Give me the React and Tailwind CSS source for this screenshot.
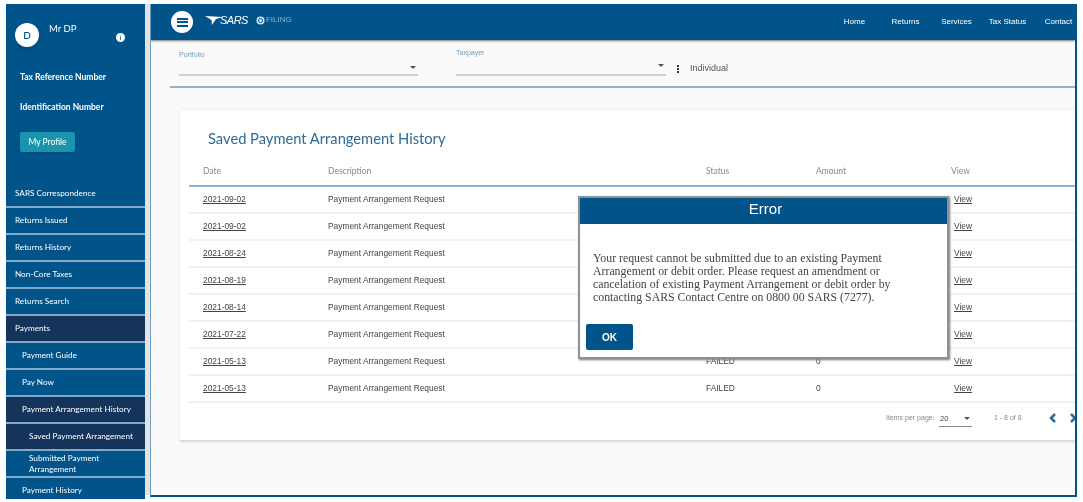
const menu = [
  { label: "SARS Correspondence", pad: "pl-[9px]" },
  { label: "Returns Issued", pad: "pl-[9px]" },
  { label: "Returns History", pad: "pl-[9px]" },
  { label: "Non-Core Taxes", pad: "pl-[9px]" },
  { label: "Returns Search", pad: "pl-[9px]" },
  { label: "Payments", pad: "pl-[9px]", active: true },
  { label: "Payment Guide", pad: "pl-[16px]" },
  { label: "Pay Now", pad: "pl-[16px]" },
  { label: "Payment Arrangement History", pad: "pl-[16px]", active: true },
  { label: "Saved Payment Arrangement", pad: "pl-[23px]", active: true },
  { label: "Submitted Payment Arrangement", pad: "pl-[23px] pr-[30px]" },
  { label: "Payment History", pad: "pl-[16px]" },
];

const rows = [
  { date: "2021-09-02" },
  { date: "2021-09-02" },
  { date: "2021-08-24" },
  { date: "2021-08-19" },
  { date: "2021-08-14" },
  { date: "2021-07-22" },
  { date: "2021-05-13", status: "FAILED", amount: "0" },
  { date: "2021-05-13", status: "FAILED", amount: "0" },
];

const nav = ["Home", "Returns", "Services", "Tax Status", "Contact"];

function Caret({ className }) {
  return <span className={`block w-0 h-0 border-x-[3px] border-x-transparent border-t-[3px] border-t-[#555] ${className || ""}`} />;
}

function Sidebar() {
  return (
    <aside className="w-[139px] h-[495px] shrink-0 bg-[#01548a] overflow-hidden font-['Lato',sans-serif] text-white">
      <div className="h-[175px] relative pl-[14px]">
        <div className="flex items-start gap-[10px] pt-[19px] -ml-[5px]">
          <div className="w-[24px] h-[24px] rounded-full bg-white text-[#01548a] text-[10px] font-semibold flex items-center justify-center shadow-md">D</div>
          <span className="text-[9.5px] leading-[12px]">Mr DP</span>
        </div>
        <div className="absolute left-[110px] top-[29px] w-[9px] h-[9px] rounded-full bg-white text-[#01548a] text-[6px] font-bold leading-[9px] text-center">i</div>
        <div className="text-[8.5px] font-bold mt-[24px] leading-[12px]">Tax Reference Number</div>
        <div className="text-[8.5px] font-bold mt-[18px] leading-[12px]">Identification Number</div>
        <button className="mt-[19px] w-[55px] h-[20px] rounded-[2px] bg-[#1a94ad] text-[8.5px] text-white shadow">My Profile</button>
      </div>
      <div className="pt-[2px]">
        {menu.map((item) => (
          <div
            key={item.label}
            className={`h-[27px] border-b-2 border-[#7fa9c6] flex items-center text-[8.2px] leading-[11px] ${item.pad} ${item.active ? "bg-[#14345c]" : ""}`}
          >
            {item.label}
          </div>
        ))}
      </div>
    </aside>
  );
}

function Header() {
  return (
    <header className="h-[36px] bg-[#01548a] shadow-[0_1px_2px_#777] flex items-center pl-[20px] text-white shrink-0">
      <div className="w-[22px] h-[22px] rounded-full bg-white flex flex-col items-center justify-center gap-[1.5px]">
        <span className="block w-[11px] h-[2px] bg-[#01548a]" />
        <span className="block w-[11px] h-[2px] bg-[#01548a]" />
        <span className="block w-[11px] h-[2px] bg-[#01548a]" />
      </div>
      <div className="flex items-center ml-[12px] mb-[4px]">
        <svg width="18" height="9" viewBox="0 0 18 9">
          <path d="M0 0 L18 1 L11 3 L7 9 L6.5 4 Z" fill="#fff" />
        </svg>
        <span className="text-[11px] leading-[14px] italic font-['Liberation_Sans',sans-serif] -ml-[3px] tracking-[-0.5px]">SARS</span>
        <svg width="9" height="9" viewBox="0 0 9 9" className="ml-[8px]">
          <circle cx="4.5" cy="4.5" r="4" fill="#cfe0ec" />
          <circle cx="4.5" cy="4.5" r="2" fill="none" stroke="#01548a" />
        </svg>
        <span className="text-[8px] text-[#8fb3cc] ml-[1px] font-['Liberation_Sans',sans-serif]">FILING</span>
      </div>
      <nav className="ml-auto -mr-[9px] flex items-center font-['Liberation_Sans',sans-serif] text-[8px]">
        {nav.map((n) => (
          <span key={n} className="w-[51px] text-center">{n}</span>
        ))}
      </nav>
    </header>
  );
}

function Filters() {
  return (
    <div className="h-[48px] ml-[19px] border-b-2 border-[#8db4d0] flex items-start font-['Liberation_Sans',sans-serif] shrink-0">
      <div className="w-[239px] ml-[9px] h-[36px] border-b-2 border-[#d0d0d0] pt-[10px] relative">
        <span className="block text-[7px] leading-[9px] text-[#6f9fc0]">Portfolio</span>
        <Caret className="absolute right-[2px] top-[26px]" />
      </div>
      <div className="w-[210px] ml-[38px] h-[36px] border-b-2 border-[#d0d0d0] pt-[8px] relative">
        <span className="block text-[7px] leading-[9px] text-[#6f9fc0]">Taxpayer</span>
        <Caret className="absolute right-[2px] top-[24px]" />
      </div>
      <div className="flex flex-col gap-[1px] ml-[11px] mt-[25px]">
        <span className="block w-[2px] h-[2px] bg-[#333]" />
        <span className="block w-[2px] h-[2px] bg-[#333]" />
        <span className="block w-[2px] h-[2px] bg-[#333]" />
      </div>
      <span className="ml-[11px] mt-[22px] text-[9px] leading-[12px] text-[#555]">Individual</span>
    </div>
  );
}

function HistoryTable() {
  const grid = "grid grid-cols-[125px_378px_110px_135px_1fr] pl-[14px]";
  return (
    <section className="ml-[29px] mt-[22px] h-[332px] bg-white border-b-2 border-[#ddd] shadow-[0_0_3px_#e5e5e5] pl-[9px]">
      <h1 className="pl-[19px] pt-[18px] text-[14.7px] leading-[20px] text-[#2d6a96] font-['Lato',sans-serif]">
        Saved Payment Arrangement History
      </h1>
      <div className={`${grid} mt-[16px] h-[20px] border-b-2 border-[#8db4d0] text-[8.5px] leading-[14px] text-[#888] font-['Lato',sans-serif] box-content pb-[1px]`}>
        <span>Date</span>
        <span>Description</span>
        <span>Status</span>
        <span>Amount</span>
        <span>View</span>
      </div>
      {rows.map((r, i) => (
        <div key={i} className={`${grid} h-[27px] items-center border-b-2 border-[#f1f1f1] text-[8.4px] text-[#444] font-['Liberation_Sans',sans-serif]`}>
          <span className="underline">{r.date}</span>
          <span>Payment Arrangement Request</span>
          <span>{r.status}</span>
          <span>{r.amount}</span>
          <span className="underline pl-[3px]">View</span>
        </div>
      ))}
      <div className="flex items-center h-[30px] font-['Liberation_Sans',sans-serif] text-[7px] text-[#888] whitespace-nowrap">
        <span className="ml-[697px] w-[48px]">Items per page:</span>
        <div className="ml-[5px] w-[33px] h-[16px] border-b border-[#888] flex items-center justify-between pr-[2px] mt-[2px] shrink-0">
          <span className="text-[#444] text-[7.5px] pl-[1px]">20</span>
          <Caret />
        </div>
        <span className="ml-[22px] w-[27px]">1 - 8 of 8</span>
        <svg width="8" height="10" viewBox="0 0 8 10" className="ml-[28px] shrink-0">
          <path d="M6 1 L2 5 L6 9" fill="none" stroke="#2d6a96" strokeWidth="2.5" />
        </svg>
        <svg width="8" height="10" viewBox="0 0 8 10" className="ml-[12px] shrink-0">
          <path d="M2 1 L6 5 L2 9" fill="none" stroke="#2d6a96" strokeWidth="2.5" />
        </svg>
      </div>
    </section>
  );
}

function ErrorDialog() {
  return (
    <div className="absolute left-[578px] top-[196px] w-[371px] h-[163px] bg-white border-2 border-[#8f8f8f] shadow-[1px_1px_2px_#777] flex flex-col">
      <div className="h-[26px] bg-[#01548a] text-white text-center pl-[4px] text-[15px] leading-[21px] font-['Liberation_Sans',sans-serif]">Error</div>
      <p className="mt-[28px] pl-[13px] pr-[49px] text-[11.8px] leading-[13px] text-[#444] font-['Liberation_Serif',serif]">
        Your request cannot be submitted due to an existing Payment Arrangement or debit order. Please request an amendment or cancelation of existing Payment Arrangement or debit order by contacting SARS Contact Centre on 0800 00 SARS (7277).
      </p>
      <button className="ml-[6px] mt-[20px] w-[47px] h-[26px] rounded-[2px] bg-[#01548a] text-white text-[10px] font-bold font-['Liberation_Sans',sans-serif]">OK</button>
    </div>
  );
}

export default function App() {
  return (
    <div className="relative w-[1083px] h-[502px] bg-white overflow-hidden blur-[0.4px]">
      <div className="flex pt-[4px] pl-[6px]">
        <Sidebar />
        <div className="w-[5px] h-[491px] bg-[#e3e3e3]" />
        <main className="w-[927px] h-[493px] bg-[#fafafa] border-l border-r-2 border-b-2 border-l-[#6f9fc0] border-r-[#01548a] border-b-[#01548a] flex flex-col overflow-hidden">
          <Header />
          <Filters />
          <HistoryTable />
        </main>
      </div>
      <ErrorDialog />
    </div>
  );
}
